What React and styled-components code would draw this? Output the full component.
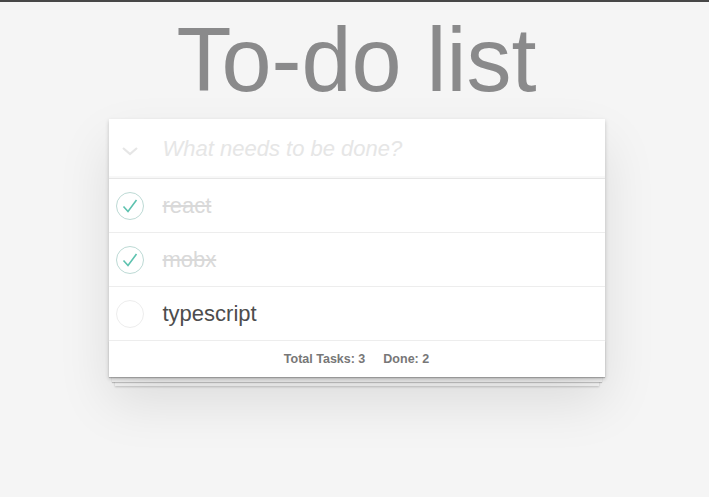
import React from "react";
import styled, { createGlobalStyle } from "styled-components";

const Global = createGlobalStyle`
  html, body { margin: 0; padding: 0; }
  body {
    background: #f5f5f5;
    font-family: "Liberation Sans", Arial, sans-serif;
    border-top: 2px solid #474747;
    min-height: 495px;
  }
`;

const Page = styled.div`
  display: flex;
  flex-direction: column;
  align-items: center;
  padding-left: 4px;
`;

const Title = styled.h1`
  margin: 0;
  height: 117px;
  font-size: 90px;
  font-weight: 400;
  line-height: 117px;
  color: #8a8a8b;
  text-align: center;
`;

const Card = styled.section`
  width: 496px;
  background: #fff;
  box-shadow: 0 2px 4px 0 rgba(0, 0, 0, 0.2), 0 25px 50px 0 rgba(0, 0, 0, 0.1);
  position: relative;
`;

const Header = styled.div`
  display: flex;
  align-items: center;
  height: 59px;
  box-shadow: inset 0 -2px 1px rgba(0, 0, 0, 0.03);
  border-bottom: 1px solid #e6e6e6;
`;

const Toggle = styled.div`
  width: 42px;
  display: flex;
  justify-content: center;
  margin-right: 12px;
  padding-top: 4px;
`;

const Input = styled.div`
  font-size: 22px;
  font-style: italic;
  color: #e6e6e6;
`;

const Row = styled.div`
  display: flex;
  align-items: center;
  height: 53px;
  border-bottom: 1px solid #ededed;
`;

const Check = styled.div`
  width: 42px;
  display: flex;
  justify-content: center;
  margin-right: 12px;
`;

const Label = styled.span`
  font-size: 22px;
  color: ${(p) => (p.$done ? "#d9d9d9" : "#4d4d4d")};
  text-decoration: ${(p) => (p.$done ? "line-through" : "none")};
`;

const Footer = styled.div`
  height: 36px;
  display: flex;
  justify-content: center;
  align-items: center;
  gap: 18px;
  font-size: 12.5px;
  font-weight: 700;
  color: #777;
  position: relative;
  &::before {
    content: "";
    position: absolute;
    left: 0;
    right: 0;
    bottom: 0;
    height: 36px;
    z-index: -1;
    box-shadow: 0 1px 1px rgba(0, 0, 0, 0.2), 0 8px 0 -3px #f6f6f6,
      0 9px 1px -3px rgba(0, 0, 0, 0.2), 0 15px 0 -6px #f6f6f6,
      0 16px 2px -6px rgba(0, 0, 0, 0.2);
  }
`;

const Circle = ({ done }) => (
  <svg width="30" height="30" viewBox="0 0 30 30">
    <circle cx="15" cy="15" r="13.5" fill="none" stroke={done ? "#bddad5" : "#ededed"} strokeWidth="1" />
    {done && (
      <path d="M8.5 15.5 L13 20.5 L21.5 9" fill="none" stroke="#5dc2af" strokeWidth="1.6" />
    )}
  </svg>
);

const todos = [
  { text: "react", done: true },
  { text: "mobx", done: true },
  { text: "typescript", done: false },
];

export default function App() {
  return (
    <>
      <Global />
      <Page>
        <Title>To-do list</Title>
        <Card>
          <Header>
            <Toggle>
              <svg width="18" height="10" viewBox="0 0 18 10">
                <path d="M2 2 L9 8 L16 2" fill="none" stroke="#e6e6e6" strokeWidth="2.2" />
              </svg>
            </Toggle>
            <Input>What needs to be done?</Input>
          </Header>
          {todos.map((t) => (
            <Row key={t.text}>
              <Check>
                <Circle done={t.done} />
              </Check>
              <Label $done={t.done}>{t.text}</Label>
            </Row>
          ))}
          <Footer>
            <span>Total Tasks: 3</span>
            <span>Done: 2</span>
          </Footer>
        </Card>
      </Page>
    </>
  );
}
